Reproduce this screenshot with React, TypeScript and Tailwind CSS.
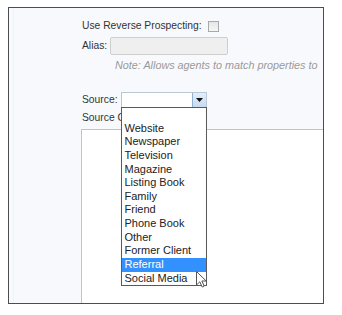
import React from "react";

const items = [
  "",
  "Website",
  "Newspaper",
  "Television",
  "Magazine",
  "Listing Book",
  "Family",
  "Friend",
  "Phone Book",
  "Other",
  "Former Client",
  "Referral",
  "Social Media",
];

export default function App() {
  return (
    <div
      className="w-[342px] h-[315px] bg-white pt-[7px] pl-[8px] text-[10.3px] text-[#333]"
      style={{ fontFamily: '"Liberation Sans", Arial, sans-serif' }}
    >
      <div className="relative w-[316px] h-[297px] border border-[#4a4d52] bg-[#f8f9fc] flex flex-col">
        <div className="absolute left-[4px] top-0 bottom-0 w-px bg-[#f4eff3]" />
        <div className="pl-[73px] pt-[11px] flex flex-col">
          <div className="flex items-center h-[12px] mt-[1px]">
            <span className="leading-none">Use Reverse Prospecting:</span>
            <span className="ml-[6px] w-[11px] h-[11px] border border-[#a9a9a9] bg-gradient-to-b from-[#e6e6e6] to-[#f6f6f6]" />
          </div>
          <div className="flex items-center mt-[5px] h-[18px]">
            <span className="leading-none">Alias:</span>
            <span className="ml-[3px] w-[118px] h-[18px] border border-[#cfcfcf] rounded-[2px] bg-[#efefef]" />
          </div>
          <div className="mt-[5px] pl-[33px] italic text-[#9a9a9a] text-[10.8px] leading-none whitespace-nowrap h-[12px]">
            Note: Allows agents to match properties to
          </div>
          <div className="flex items-center mt-[20px] h-[16px]">
            <span className="leading-none">Source:</span>
            <div className="relative ml-[3px] w-[86px] h-[16px] border border-[#b8c8d8] bg-white">
              <div className="absolute right-0 top-0 bottom-0 w-[14px] border-l border-[#8fb2d4] bg-gradient-to-b from-[#e4eefa] to-[#c7dbf0] flex items-center justify-center">
                <svg width="7" height="4" viewBox="0 0 7 4">
                  <path d="M0 0 H7 L3.5 4 Z" fill="#111" />
                </svg>
              </div>
              <div className="absolute left-[-1px] top-[14px] w-[86px] border border-[#5a5a5a] bg-white z-10 text-[11px]">
                {items.map((it, i) => (
                  <div
                    key={i}
                    className={
                      "h-[13.64px] leading-[13.64px] pl-[3px] whitespace-nowrap " +
                      (it === "Referral" ? "bg-[#3390ff] text-white" : "text-[#222]")
                    }
                  >
                    {it}
                  </div>
                ))}
              </div>
            </div>
          </div>
          <div className="mt-[5px] leading-none h-[12px] whitespace-nowrap">Source Comments:</div>
        </div>
        <div className="mt-[4px] ml-[72px] flex-1 border-l border-t border-[#c4c4c4] bg-white" />
        <svg
          className="absolute left-[187px] top-[263px] z-20"
          width="12"
          height="17"
          viewBox="0 0 12 17"
        >
          <path
            d="M0.5 0.5 L0.5 14 L3.8 10.8 L6.2 16 L8.2 15.1 L5.9 10 L10.2 10 Z"
            fill="#fff"
            stroke="#555"
            strokeWidth="1"
            strokeLinejoin="miter"
          />
        </svg>
      </div>
    </div>
  );
}
